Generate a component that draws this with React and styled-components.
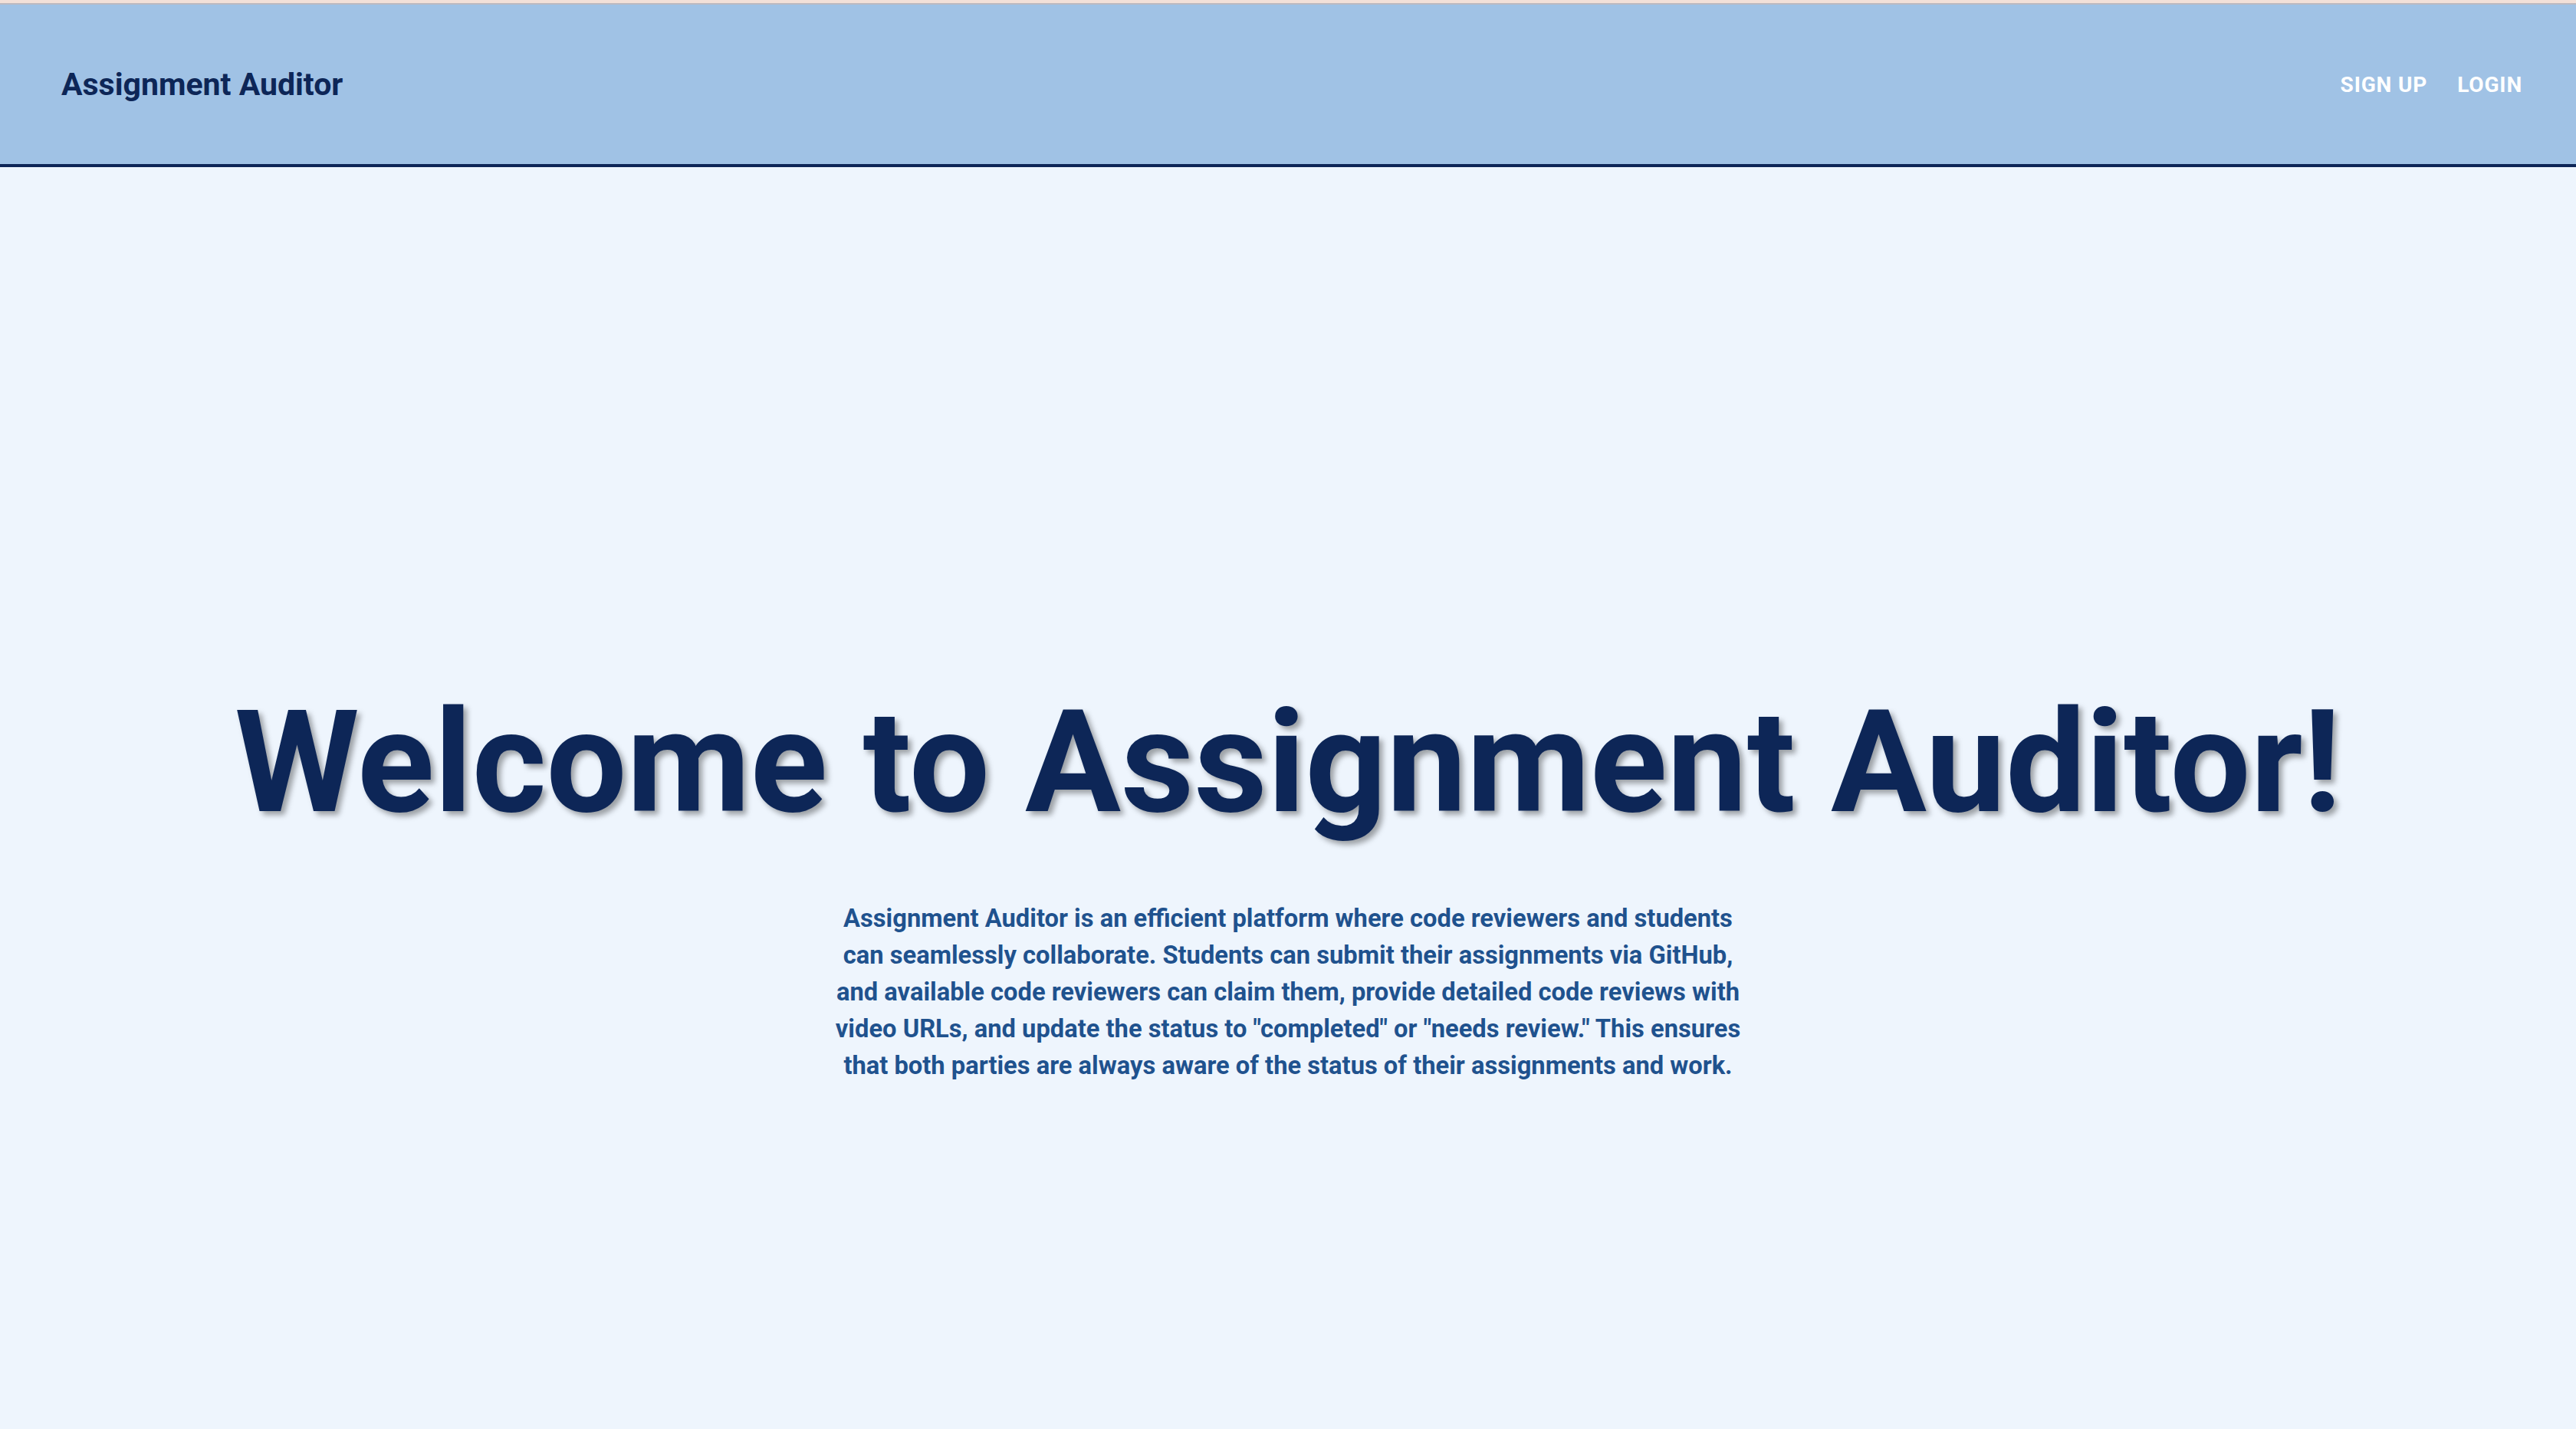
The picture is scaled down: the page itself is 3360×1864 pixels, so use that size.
import React from 'react'
import styled, { createGlobalStyle } from 'styled-components'

const GlobalStyle = createGlobalStyle`
  html, body {
    margin: 0;
    padding: 0;
    background: #eef5fd;
    font-family: Roboto, "Liberation Sans", sans-serif;
  }
  * { box-sizing: border-box; }
`

const Page = styled.div`
  min-height: 100vh;
  display: flex;
  flex-direction: column;
  background: #eef5fd;
  border-top: 4px solid #f2e0d8;
`

const Header = styled.header`
  height: 214px;
  display: flex;
  align-items: center;
  justify-content: space-between;
  padding: 0 56px 0 80px;
  background: #a0c2e5;
  border-top: 2px solid #bdb9c0;
  border-bottom: 4px solid #0d2657;
`

const Brand = styled.div`
  font-size: 41px;
  font-weight: 700;
  color: #0d2657;
`

const Nav = styled.nav`
  display: flex;
  align-items: center;
  gap: 11px;
`

const NavButton = styled.button`
  background: none;
  border: none;
  padding: 8px 14px;
  font-family: inherit;
  font-size: 28px;
  font-weight: 700;
  letter-spacing: 0.03em;
  text-transform: uppercase;
  color: #ffffff;
  cursor: pointer;
`

const Hero = styled.main`
  flex: 1;
  display: flex;
  flex-direction: column;
  align-items: center;
  padding-top: 665px;
`

const Title = styled.h1`
  margin: 0;
  font-size: 186px;
  line-height: 1.2;
  font-weight: 700;
  color: #0d2657;
  text-shadow: 5px 5px 7px rgba(0, 0, 0, 0.35);
  white-space: nowrap;
`

const Blurb = styled.p`
  margin: 68px 0 0;
  max-width: 1192px;
  text-align: center;
  font-size: 32.7px;
  line-height: 48px;
  font-weight: 700;
  color: #1f528e;
`

export default function App() {
  return (
    <>
      <GlobalStyle />
      <Page>
        <Header>
          <Brand>Assignment Auditor</Brand>
          <Nav>
            <NavButton>Sign Up</NavButton>
            <NavButton>Login</NavButton>
          </Nav>
        </Header>
        <Hero>
          <Title>Welcome to Assignment Auditor!</Title>
          <Blurb>
            Assignment Auditor is an efficient platform where code reviewers and students
            can seamlessly collaborate. Students can submit their assignments via GitHub,
            and available code reviewers can claim them, provide detailed code reviews with
            video URLs, and update the status to "completed" or "needs review." This ensures
            that both parties are always aware of the status of their assignments and work.
          </Blurb>
        </Hero>
      </Page>
    </>
  )
}
